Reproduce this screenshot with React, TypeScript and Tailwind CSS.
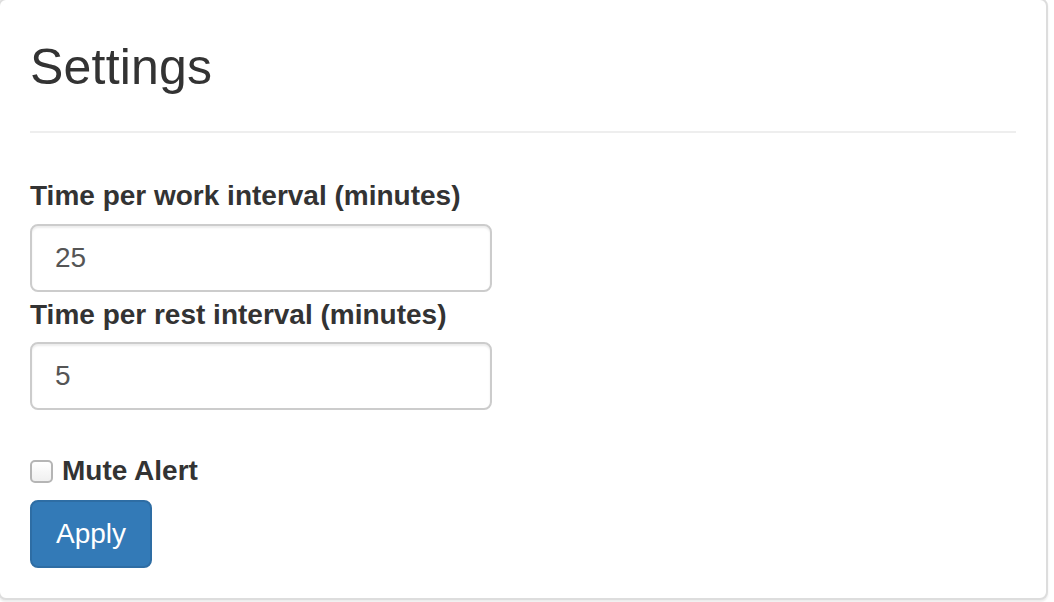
import React from "react";

export default function App() {
  return (
    <div className="w-[1054px] h-[602px] overflow-hidden bg-white" style={{ fontFamily: '"Liberation Sans", Arial, sans-serif' }}>
      <div className="ml-[-2px] mt-[-2px] w-[1050px] h-[602px] rounded-[8px] border-2 border-[#dddddd] bg-white shadow-[0_2px_2px_rgba(0,0,0,0.08)] pl-[30px] pr-[30px] pt-[40px] flex flex-col text-[#333333]">
        <h2 className="text-[50px] leading-[54px] font-normal m-0 tracking-[0.2px]">Settings</h2>
        <div className="mt-[37px] h-[2px] bg-[#eeeeee]" />
        <label className="mt-[43px] text-[28px] leading-[40px] font-bold">Time per work interval (minutes)</label>
        <div className="mt-[8px] w-[462px] h-[68px] rounded-[8px] border-2 border-[#cccccc] shadow-[inset_0_2px_2px_rgba(0,0,0,0.075)] flex items-center pl-[23px] text-[28px] text-[#555555]">25</div>
        <label className="mt-[3px] text-[28px] leading-[40px] font-bold">Time per rest interval (minutes)</label>
        <div className="mt-[7px] w-[462px] h-[68px] rounded-[8px] border-2 border-[#cccccc] shadow-[inset_0_2px_2px_rgba(0,0,0,0.075)] flex items-center pl-[23px] text-[28px] text-[#555555]">5</div>
        <div className="mt-[41px] flex items-center h-[40px]">
          <span className="w-[23px] h-[23px] rounded-[5px] border-2 border-[#b5b5b5] bg-gradient-to-b from-white to-[#f0f0f0]" />
          <span className="ml-[9px] text-[28px] leading-[40px] font-bold">Mute Alert</span>
        </div>
        <div className="mt-[9px]">
          <button className="h-[68px] px-[24px] rounded-[8px] border-2 border-[#2e6da4] bg-[#337ab7] text-white text-[28px] leading-[40px]">Apply</button>
        </div>
      </div>
    </div>
  );
}
